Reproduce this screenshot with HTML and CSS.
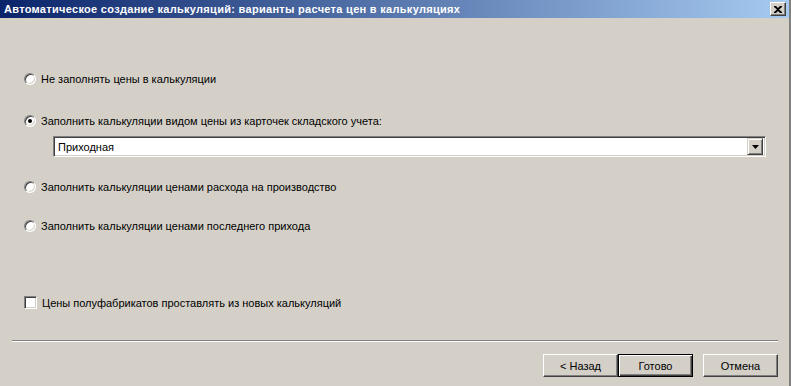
FILE: index.html
```html
<!DOCTYPE html>
<html>
<head>
<meta charset="utf-8">
<link rel="stylesheet" href="styles.css">
</head>
<body>
<div class="window">
  <div class="titlebar">
    <span class="title">Автоматическое создание калькуляций: варианты расчета цен в калькуляциях</span>
    <span class="close"><svg width="8" height="7" viewBox="0 0 8 7"><path d="M0 0h2l2 2 2-2h2v1L5 3.5 8 6v1H6L4 5 2 7H0V6l3-2.5L0 1z" fill="#000"/></svg></span>
  </div>
  <div class="content">
    <div class="options">
      <label class="opt r1"><span class="radio"></span><span>Не заполнять цены в калькуляции</span></label>
      <label class="opt r2"><span class="radio checked"></span><span>Заполнить калькуляции видом цены из карточек складского учета:</span></label>
      <div class="combo">
        <span class="combo-text">Приходная</span>
        <span class="combo-btn"><svg width="7" height="4" viewBox="0 0 7 4"><path d="M0 0h7L3.5 4z" fill="#000"/></svg></span>
      </div>
      <label class="opt r3"><span class="radio"></span><span>Заполнить калькуляции ценами расхода на производство</span></label>
      <label class="opt r4"><span class="radio"></span><span>Заполнить калькуляции ценами последнего прихода</span></label>
      <label class="opt r5"><span class="check"></span><span>Цены полуфабрикатов проставлять из новых калькуляций</span></label>
    </div>
    <div class="separator"></div>
    <div class="buttons">
      <span class="btn">&lt; Назад</span>
      <span class="btn default">Готово</span>
      <span class="btn cancel">Отмена</span>
    </div>
  </div>
</div>
</body>
</html>
```
FILE: styles.css
```css
html, body {
  margin: 0;
  padding: 0;
  background: #d4d0c8;
}
.window {
  width: 791px;
  height: 386px;
  box-sizing: border-box;
  border-right: 2px solid #808080;
  font-family: "Liberation Sans", Arial, sans-serif;
  font-size: 11px;
  color: #000;
  display: flex;
  flex-direction: column;
}
.titlebar {
  height: 18px;
  background: linear-gradient(to right, #0a246a, #a6caf0);
  display: flex;
  align-items: center;
  justify-content: space-between;
  padding: 0 3px 0 4px;
}
.title {
  color: #fff;
  font-weight: bold;
  font-size: 11px;
  letter-spacing: 0.3px;
}
.close {
  width: 16px;
  height: 14px;
  box-sizing: border-box;
  background: #d4d0c8;
  border: 1px solid;
  border-color: #fff #404040 #404040 #fff;
  box-shadow: inset -1px -1px #808080;
  display: flex;
  align-items: center;
  justify-content: center;
}
.content {
  flex: 1;
  display: flex;
  flex-direction: column;
}
.options {
  display: flex;
  flex-direction: column;
  padding-left: 24px;
}
.opt {
  display: flex;
  align-items: center;
  height: 13px;
  gap: 5px;
}
.r1 { margin-top: 54px; }
.r2 { margin-top: 29px; }
.r3 { margin-top: 23px; }
.r4 { margin-top: 26px; }
.r5 { margin-top: 64px; }
.radio {
  width: 12px;
  height: 12px;
  box-sizing: border-box;
  border-radius: 50%;
  background: #fff;
  border: 1px solid;
  border-color: #808080 #fff #fff #808080;
  box-shadow: inset 1px 1px #404040, inset -1px -1px #d4d0c8;
  position: relative;
}
.radio.checked::after {
  content: "";
  position: absolute;
  left: 3px;
  top: 3px;
  width: 4px;
  height: 4px;
  border-radius: 50%;
  background: #000;
}
.check {
  width: 13px;
  height: 13px;
  box-sizing: border-box;
  background: #fff;
  border: 1px solid;
  border-color: #808080 #fff #fff #808080;
  box-shadow: inset 1px 1px #404040, inset -1px -1px #d4d0c8;
}
.combo {
  margin-top: 9px;
  margin-left: 29px;
  width: 713px;
  height: 21px;
  box-sizing: border-box;
  background: #fff;
  border: 1px solid;
  border-color: #808080 #fff #fff #808080;
  box-shadow: inset 1px 1px #404040, inset -1px -1px #d4d0c8;
  display: flex;
  align-items: center;
  justify-content: space-between;
  padding: 2px;
}
.combo-text {
  padding-left: 2px;
}
.combo-btn {
  width: 16px;
  height: 17px;
  box-sizing: border-box;
  background: #d4d0c8;
  border: 1px solid;
  border-color: #d4d0c8 #404040 #404040 #d4d0c8;
  box-shadow: inset 1px 1px #fff, inset -1px -1px #808080;
  display: flex;
  align-items: center;
  justify-content: center;
}
.separator {
  margin: 31px 11px 0 12px;
  border-top: 1px solid #808080;
  border-bottom: 1px solid #fff;
  height: 0;
}
.buttons {
  display: flex;
  justify-content: flex-end;
  padding-right: 11px;
  margin-top: 12px;
}
.btn {
  width: 75px;
  height: 23px;
  box-sizing: border-box;
  border: 1px solid;
  border-color: #fff #404040 #404040 #fff;
  box-shadow: inset -1px -1px #808080;
  display: flex;
  align-items: center;
  justify-content: center;
}
.btn.default {
  border: 1px solid #000;
  box-shadow: inset 1px 1px #fff, inset -1px -1px #404040, inset -2px -2px #808080;
}
.btn.cancel {
  margin-left: 10px;
}
```
